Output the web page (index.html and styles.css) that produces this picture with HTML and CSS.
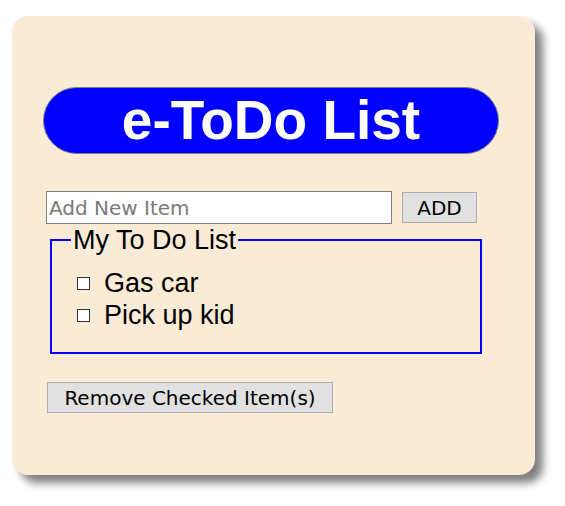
FILE: index.html
```html
<!doctype html>
<html lang="en">
	<head>
		<title>e-ToDo List</title>
		<meta charset="utf-8">
		<link rel="stylesheet" href="styles.css">
	</head>
	<body>
<div class="card">
	<h1 class="title">e-ToDo List</h1>

	<div class="add-row">
		<input type="text" id="newItem" placeholder="Add New Item">
		<button id="addBtn" class="btn add">ADD</button>
	</div>

	<fieldset class="list">
		<legend>My To Do List</legend>
		<ul id="items">
			<li><input type="checkbox"><span>Gas car</span></li>
			<li><input type="checkbox"><span>Pick up kid</span></li>
		</ul>
	</fieldset>

	<button id="removeBtn" class="btn remove">Remove Checked Item(s)</button>
</div>
	</body>
</html>
```

FILE: styles.css
```css
* {
	box-sizing: border-box;
}
html, body {
	height: 100%;
}
body {
	margin: 0;
	padding: 16px 0 0 12px;
	background: #ffffff;
	font-family: 'Liberation Sans', Arial, sans-serif;
}
.card {
	width: 523px;
	height: 459px;
	padding: 71px 36px 0 31px;
	background: #faebd7;
	border-radius: 16px;
	box-shadow: 8px 8px 8px #808080;
}
.title {
	margin: 0;
	height: 67px;
	border: 1px solid #808080;
	border-radius: 34px;
	background: #0000ff;
	color: #ffffff;
	font-size: 55px;
	font-weight: bold;
	line-height: 64px;
	text-align: center;
}
.add-row {
	display: flex;
	align-items: flex-start;
	margin: 37px 0 0 3px;
}
.add-row input {
	width: 346px;
	height: 33px;
	margin: 0;
	padding: 0 2px;
	border: 1px solid #808080;
	background: #ffffff;
	font-family: 'DejaVu Sans', sans-serif;
	font-size: 20px;
}
.add-row input::placeholder {
	color: #7a7a7a;
}
.btn {
	height: 31px;
	margin: 0;
	padding: 0;
	border: 1px solid #adadad;
	background: #e1e1e1;
	color: #000000;
	font-family: 'DejaVu Sans', sans-serif;
	font-size: 20px;
}
.btn.add {
	width: 75px;
	margin: 1px 0 0 10px;
}
.list {
	width: 432px;
	margin: 2px 0 0 7px;
	padding: 0 0 21px 19px;
	border: 2px solid #0000ff;
}
.list legend {
	padding: 0 2px;
	font-size: 27px;
	line-height: 28px;
}
.list ul {
	list-style: none;
	margin: 13px 0 0 0;
	padding: 0;
}
.list li {
	display: flex;
	align-items: center;
	height: 32px;
	font-size: 27px;
}
.list li input {
	appearance: none;
	width: 13px;
	height: 13px;
	margin: 0 14px 0 6px;
	border: 1px solid #333333;
	background: #ffffff;
}
.btn.remove {
	display: block;
	width: 286px;
	margin: 28px 0 0 4px;
}
```
